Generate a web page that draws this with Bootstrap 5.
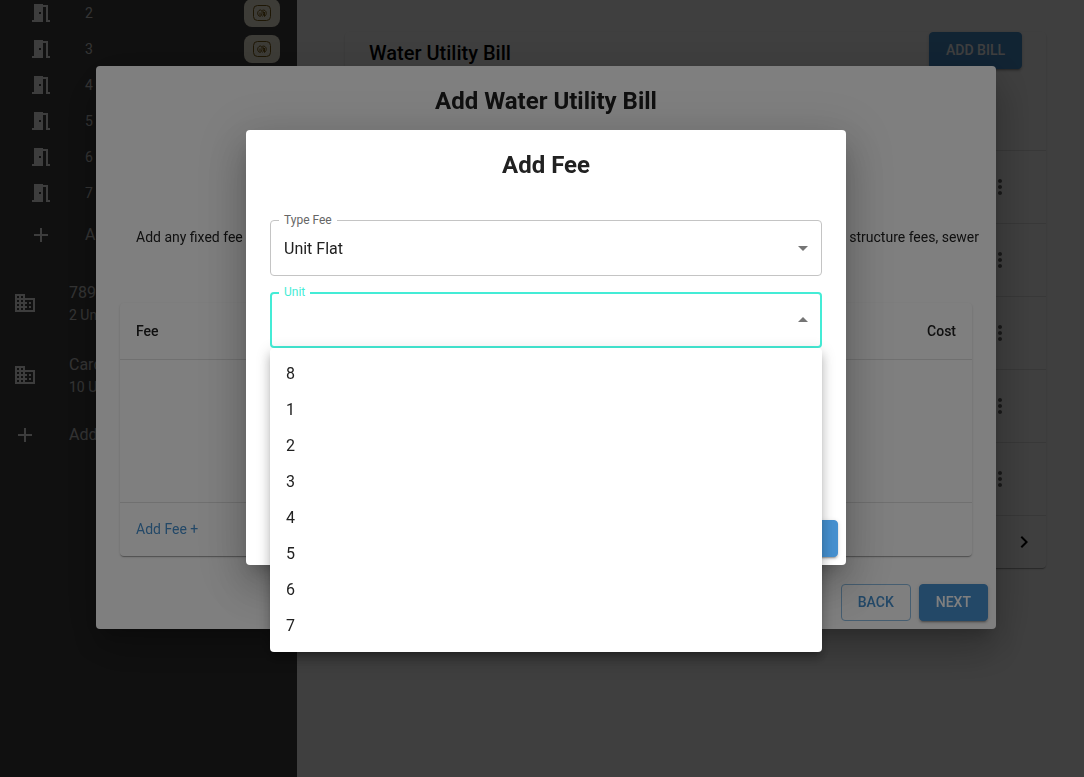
<!DOCTYPE html>
<html lang="en">
<head>
<meta charset="utf-8">
<meta name="viewport" content="width=device-width, initial-scale=1">
<title>Add Fee</title>
<link href="https://cdn.jsdelivr.net/npm/bootstrap@5.3.0/dist/css/bootstrap.min.css" rel="stylesheet">
<style>
  :root { --brand: #4690cf; --focus: #44ecd6; --ink: #212121; --line: #e0e0e0; }
  body { font-family: Roboto, "Liberation Sans", sans-serif; font-size: 14px; line-height: 20px; color: var(--ink); overflow: hidden; }
  svg { fill: currentColor; display: block; flex: none; }
  .app-shell { height: 100vh; overflow: hidden; background: #fff; }
  .side-panel { width: 297px; flex: none; background: #424242; }
  .side-panel ul { margin-top: -5px; }
  .side-panel a { color: #d4d4d4; text-decoration: none; }
  .side-panel a > svg { color: #f4f4f4; }
  .unit-link { height: 36px; padding: 0 17px 0 29px; gap: 32px; }
  .add-link { height: 48px; font-size: 16px; }
  .add-unit { padding-left: 29px; gap: 32px; margin-bottom: 8px; }
  .building-link { height: 72px; padding-left: 13px; gap: 32px; }
  .building-link strong { font-size: 16px; line-height: 24px; font-weight: 400; display: block; }
  .add-building { padding-left: 13px; gap: 32px; }
  .meter-chip { width: 36px; height: 28px; border-radius: 8px; background: #f6f0dc; color: #7a5c14; }
  .meter-chip svg { fill: none; stroke: currentColor; }
  .main-area { padding: 32px 38px 0 48px; }
  .paper { background: #fff; border-radius: 4px; box-shadow: 0 2px 1px -1px rgba(0,0,0,.2), 0 1px 1px 0 rgba(0,0,0,.14), 0 1px 3px 0 rgba(0,0,0,.12); }
  .paper table { margin: 0; width: 100%; border-collapse: separate; border-spacing: 0; }
  .paper th { font-weight: 500; }
  .paper th, .paper td { border-bottom: 1px solid var(--line); padding: 0 16px; }
  .bill-head { padding: 0 24px; }
  .bill-head h1 { font-size: 20px; line-height: 32px; font-weight: 500; color: #000; }
  .bill-table th { height: 82px; }
  .bill-table td { height: 73px; padding-right: 34px; }
  .pager { height: 52px; padding-right: 10px; }
  .icon-button { border: 0; background: none; padding: 0; color: #000; }
  .bill-table .icon-button { color: #666; }
  .action { --bs-btn-font-size: 14px; --bs-btn-font-weight: 500; --bs-btn-line-height: 25px; --bs-btn-padding-x: 16px; --bs-btn-padding-y: 5px; --bs-btn-border-radius: 4px;
    --bs-btn-bg: var(--brand); --bs-btn-border-color: var(--brand); --bs-btn-color: #fff; --bs-btn-hover-bg: #3a80bb; --bs-btn-hover-color: #fff; height: 37px; text-transform: uppercase;
    box-shadow: 0 3px 1px -2px rgba(0,0,0,.2), 0 2px 2px 0 rgba(0,0,0,.14), 0 1px 5px 0 rgba(0,0,0,.12); }
  .action-outline { --bs-btn-bg: transparent; --bs-btn-color: var(--brand); --bs-btn-border-color: #8cbce2; box-shadow: none; }
  .layer { background: rgba(0,0,0,.5); padding: 66px 16px 0 24px; }
  .layer-inner { padding-top: 130px; }
  .sheet { margin: 0 auto; border-radius: 4px; background: #fff; color: var(--ink);
    box-shadow: 0 11px 15px -7px rgba(0,0,0,.2), 0 24px 38px 3px rgba(0,0,0,.14), 0 9px 46px 8px rgba(0,0,0,.12); }
  .sheet-wide { max-width: 900px; }
  .sheet-narrow { max-width: 600px; }
  .sheet h2 { font-size: 24px; line-height: 38px; font-weight: 700; padding: 16px 24px; margin: 0; text-align: center; }
  .sheet-body { padding: 0 24px; }
  .intro { padding: 91px 0 56px 16px; margin-right: -7px; }
  .fee-table th { height: 57px; }
  .fee-table td { height: 143px; }
  .fee-foot { height: 53px; padding: 0 16px 2px; }
  .fee-foot a { color: var(--brand); text-decoration: none; }
  .sheet-actions { padding: 8px; gap: 8px; }
  .wide-actions { margin-top: 20px; }
  .narrow-actions { margin-top: 164px; }
  .fee-fields { padding-top: 20px; gap: 16px; }
  .outlined label { position: absolute; top: -10px; left: 9px; padding: 0 5px; background: #fff; font-size: 12px; color: #666; }
  .outlined select { appearance: none; display: block; width: 100%; height: 56px; border: 1px solid #c4c4c4; border-radius: 4px; padding: 2px 32px 0 13px; background: transparent; font-size: 16px; color: var(--ink); outline: 0; }
  .outlined > svg { position: absolute; right: 7px; top: 16px; color: #757575; pointer-events: none; }
  .outlined.is-open label { color: var(--focus); }
  .outlined.is-open select { border: 2px solid var(--focus); }
  .outlined.is-open > svg { transform: rotate(180deg); }
  .option-menu { --bs-dropdown-font-size: 16px; --bs-dropdown-border-width: 0; --bs-dropdown-padding-y: 8px; --bs-dropdown-item-padding-x: 16px; --bs-dropdown-item-padding-y: 6px; --bs-dropdown-border-radius: 4px; --bs-dropdown-link-color: #212121; top: 100%; left: 0; right: 0; line-height: 24px;
    box-shadow: 0 5px 5px -3px rgba(0,0,0,.2), 0 8px 10px 1px rgba(0,0,0,.14), 0 3px 14px 2px rgba(0,0,0,.12); }
</style>
</head>
<body>
<svg class="d-none" aria-hidden="true">
  <symbol id="door" viewBox="0 0 24 24"><path d="M14 6v15H3v-2h2V3h9v1h5v15h2v2h-4V6h-3zm-4 5v2h2v-2h-2z"/></symbol>
  <symbol id="plus" viewBox="0 0 24 24"><path d="M19 13h-6v6h-2v-6H5v-2h6V5h2v6h6v2z"/></symbol>
  <symbol id="building" viewBox="0 0 24 24"><path d="M12 7V3H2v18h20V7H12zM6 19H4v-2h2v2zm0-4H4v-2h2v2zm0-4H4V9h2v2zm0-4H4V5h2v2zm4 12H8v-2h2v2zm0-4H8v-2h2v2zm0-4H8V9h2v2zm0-4H8V5h2v2zm10 12h-8v-2h2v-2h-2v-2h2v-2h-2V9h8v10zm-2-8h-2v2h2v-2zm0 4h-2v2h2v-2z"/></symbol>
  <symbol id="dots" viewBox="0 0 24 24"><path d="M12 8c1.100 0 2-.9 2-2s-.9-2-2-2-2 .9-2 2 .9 2 2 2zm0 2c-1.100 0-2 .9-2 2s.9 2 2 2 2-.9 2-2-.9-2-2-2zm0 6c-1.100 0-2 .9-2 2s.9 2 2 2 2-.9 2-2-.9-2-2-2z"/></symbol>
  <symbol id="caret" viewBox="0 0 24 24"><path d="M7 10l5 5 5-5z"/></symbol>
  <symbol id="next" viewBox="0 0 24 24"><path d="M10 6L8.590 7.410 13.170 12l-4.580 4.590L10 18l6-6z"/></symbol>
  <symbol id="meter" viewBox="0 0 18 16"><rect x=".5" y=".5" width="17" height="15" rx="4"/><path d="M6.500 11.500C4 10 4 6 7 5c2.800-.5 2.500 5 .5 6.500M7 7.500v4M9.500 5.200c4-1 5 4.300 2 6.300M11.500 7v4.500M9.500 11.500c1.500-1.500 1.500-4.500 0-6"/></symbol>
</svg>

<div class="app-shell d-flex">
  <nav class="side-panel" aria-label="Properties">
    <ul class="list-unstyled mb-0">
      <li><a href="#" class="unit-link d-flex align-items-center"><svg width="24" height="24"><use href="#door"/></svg>2<span class="meter-chip d-flex align-items-center justify-content-center ms-auto"><svg width="18" height="16"><use href="#meter"/></svg></span></a></li>
      <li><a href="#" class="unit-link d-flex align-items-center"><svg width="24" height="24"><use href="#door"/></svg>3<span class="meter-chip d-flex align-items-center justify-content-center ms-auto"><svg width="18" height="16"><use href="#meter"/></svg></span></a></li>
      <li><a href="#" class="unit-link d-flex align-items-center"><svg width="24" height="24"><use href="#door"/></svg>4</a></li>
      <li><a href="#" class="unit-link d-flex align-items-center"><svg width="24" height="24"><use href="#door"/></svg>5</a></li>
      <li><a href="#" class="unit-link d-flex align-items-center"><svg width="24" height="24"><use href="#door"/></svg>6</a></li>
      <li><a href="#" class="unit-link d-flex align-items-center"><svg width="24" height="24"><use href="#door"/></svg>7</a></li>
      <li><a href="#" class="add-link add-unit d-flex align-items-center"><svg width="24" height="24"><use href="#plus"/></svg>Add</a></li>
      <li><a href="#" class="building-link d-flex align-items-center"><svg width="24" height="24"><use href="#building"/></svg><span><strong>789 Main</strong>2 Units</span></a></li>
      <li><a href="#" class="building-link d-flex align-items-center"><svg width="24" height="24"><use href="#building"/></svg><span><strong>Cardinal</strong>10 Units</span></a></li>
      <li><a href="#" class="add-link add-building d-flex align-items-center"><svg width="24" height="24"><use href="#plus"/></svg>Add Property</a></li>
    </ul>
  </nav>

  <main class="main-area flex-grow-1">
    <section class="paper">
      <div class="bill-head d-flex align-items-center justify-content-between">
        <h1 class="mb-0 pt-1">Water Utility Bill</h1>
        <button type="button" class="btn action">Add Bill</button>
      </div>
      <table class="bill-table">
        <thead><tr><th scope="col">Date</th><th></th></tr></thead>
        <tbody>
          <tr><td></td><td><button type="button" class="icon-button d-block ms-auto" aria-label="More"><svg width="24" height="24"><use href="#dots"/></svg></button></td></tr>
          <tr><td></td><td><button type="button" class="icon-button d-block ms-auto" aria-label="More"><svg width="24" height="24"><use href="#dots"/></svg></button></td></tr>
          <tr><td></td><td><button type="button" class="icon-button d-block ms-auto" aria-label="More"><svg width="24" height="24"><use href="#dots"/></svg></button></td></tr>
          <tr><td></td><td><button type="button" class="icon-button d-block ms-auto" aria-label="More"><svg width="24" height="24"><use href="#dots"/></svg></button></td></tr>
          <tr><td></td><td><button type="button" class="icon-button d-block ms-auto" aria-label="More"><svg width="24" height="24"><use href="#dots"/></svg></button></td></tr>
        </tbody>
      </table>
      <div class="pager d-flex align-items-center justify-content-end">
        <button type="button" class="icon-button" aria-label="Next page"><svg width="24" height="24"><use href="#next"/></svg></button>
      </div>
    </section>
  </main>
</div>

<div class="modal layer d-block" role="dialog" aria-labelledby="bill-title">
  <div class="sheet sheet-wide">
    <h2 id="bill-title">Add Water Utility Bill</h2>
    <div class="sheet-body">
      <div class="intro d-flex justify-content-between"><span>Add any fixed fee</span><span>structure fees, sewer</span></div>
      <div class="paper">
        <table class="fee-table">
          <thead><tr><th scope="col">Fee</th><th scope="col" class="text-end">Cost</th></tr></thead>
          <tbody><tr><td></td><td></td></tr></tbody>
        </table>
        <div class="fee-foot d-flex align-items-center"><a href="#">Add Fee +</a></div>
      </div>
    </div>
    <div class="sheet-actions wide-actions d-flex justify-content-end">
      <button type="button" class="btn action action-outline">Back</button>
      <button type="button" class="btn action">Next</button>
    </div>
  </div>
</div>

<div class="modal layer layer-inner d-block" role="dialog" aria-modal="true" aria-labelledby="fee-title">
  <div class="sheet sheet-narrow">
    <h2 id="fee-title">Add Fee</h2>
    <div class="sheet-body fee-fields d-flex flex-column">
      <div class="outlined position-relative">
        <select id="type-fee"><option>Unit Flat</option></select>
        <label for="type-fee">Type Fee</label>
        <svg width="24" height="24"><use href="#caret"/></svg>
      </div>
      <div class="outlined is-open position-relative">
        <select id="unit"><option></option></select>
        <label for="unit">Unit</label>
        <svg width="24" height="24"><use href="#caret"/></svg>
        <div class="dropdown-menu option-menu show" role="listbox" aria-label="Unit">
          <button type="button" class="dropdown-item" role="option">8</button>
          <button type="button" class="dropdown-item" role="option">1</button>
          <button type="button" class="dropdown-item" role="option">2</button>
          <button type="button" class="dropdown-item" role="option">3</button>
          <button type="button" class="dropdown-item" role="option">4</button>
          <button type="button" class="dropdown-item" role="option">5</button>
          <button type="button" class="dropdown-item" role="option">6</button>
          <button type="button" class="dropdown-item" role="option">7</button>
        </div>
      </div>
    </div>
    <div class="sheet-actions narrow-actions d-flex justify-content-end">
      <button type="button" class="btn action">Add</button>
    </div>
  </div>
</div>
<script src="https://cdn.jsdelivr.net/npm/bootstrap@5.3.0/dist/js/bootstrap.bundle.min.js"></script>
</body>
</html>
